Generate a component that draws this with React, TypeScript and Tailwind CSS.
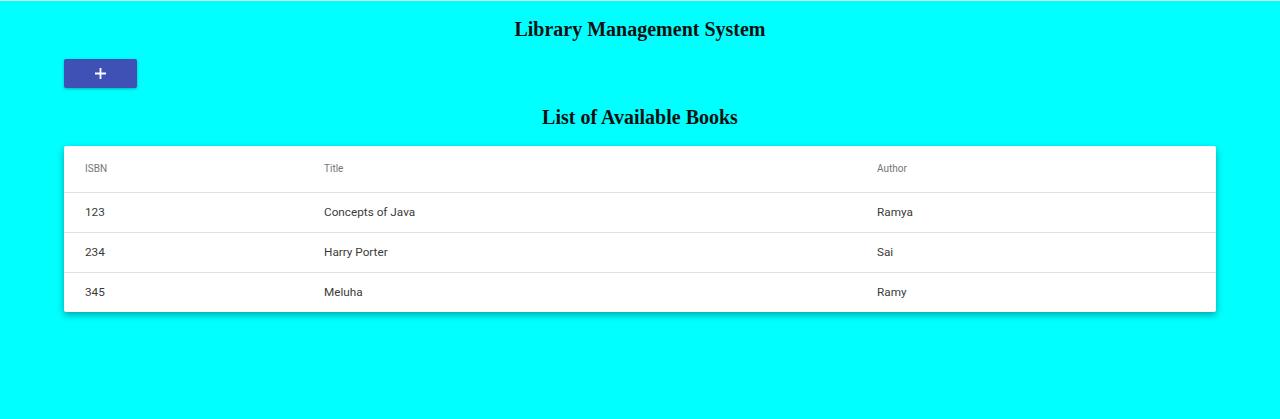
import { useState } from "react";

type Book = {
  isbn: string;
  title: string;
  author: string;
};

export default function App() {
  const [books] = useState<Book[]>([
    { isbn: "123", title: "Concepts of Java", author: "Ramya" },
    { isbn: "234", title: "Harry Porter", author: "Sai" },
    { isbn: "345", title: "Meluha", author: "Ramy" },
  ]);

  return (
    <div className="min-h-[419px] bg-[#00ffff] border-t border-[#c9fbfb] font-['Roboto',sans-serif]">
      <h2 className="pt-[13px] h-[58px] text-center text-[20px] leading-[30px] font-bold text-[#111] font-['Liberation_Serif',serif]">
        Library Management System
      </h2>
      <div className="px-[64px]">
        <button className="w-[73px] h-[29px] bg-[#3f51b5] rounded-[2px] shadow-[0_1px_3px_rgba(0,0,0,0.3)] flex items-center justify-center text-white">
          <svg width="13" height="13" viewBox="0 0 13 13">
            <path d="M6.5 1v11M1 6.5h11" stroke="white" strokeWidth="1.8" />
          </svg>
        </button>
      </div>
      <h2 className="mt-[14px] h-[44px] text-center text-[20px] leading-[30px] font-bold text-[#111] font-['Liberation_Serif',serif]">
        List of Available Books
      </h2>
      <div className="mx-[64px] bg-white rounded-[2px] shadow-[0_3px_7px_rgba(0,0,0,0.35)]">
        <table className="w-full text-left border-collapse">
          <thead>
            <tr className="h-[46px] border-b border-[#e0e0e0]">
              <th className="pl-[21px] w-[260px] text-[10px] font-normal text-[#757575]">ISBN</th>
              <th className="w-[553px] text-[10px] font-normal text-[#757575]">Title</th>
              <th className="text-[10px] font-normal text-[#757575]">Author</th>
            </tr>
          </thead>
          <tbody>
            {books.map((b, i) => (
              <tr key={b.isbn} className={i < books.length - 1 ? "h-[40px] border-b border-[#e0e0e0]" : "h-[40px]"}>
                <td className="pl-[21px] pt-[2px] text-[11.75px] text-[#3a3a3a]">{b.isbn}</td>
                <td className="pt-[2px] text-[11.75px] text-[#3a3a3a]">{b.title}</td>
                <td className="pt-[2px] text-[11.75px] text-[#3a3a3a]">{b.author}</td>
              </tr>
            ))}
          </tbody>
        </table>
      </div>
    </div>
  );
}
